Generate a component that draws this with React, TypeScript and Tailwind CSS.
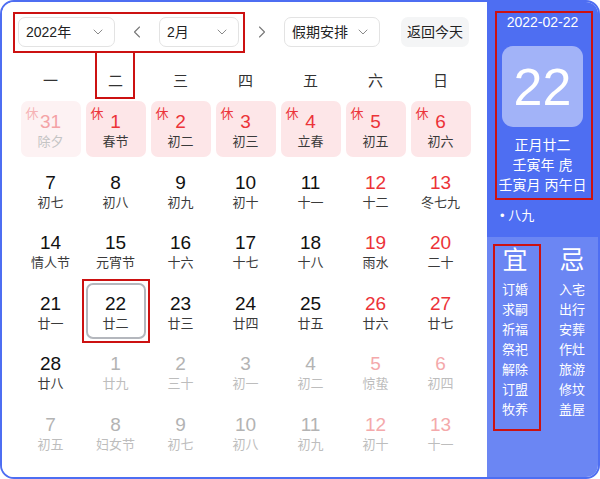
import React from "react";
import { ChevronDown, ChevronLeft, ChevronRight } from "lucide-react";

type Kind = "n" | "w" | "ph" | "h" | "x" | "xw";
type Day = { d: number; l: string; k: Kind; sel?: boolean };

const rows: Day[][] = [
  [
    { d: 31, l: "除夕", k: "ph" },
    { d: 1, l: "春节", k: "h" },
    { d: 2, l: "初二", k: "h" },
    { d: 3, l: "初三", k: "h" },
    { d: 4, l: "立春", k: "h" },
    { d: 5, l: "初五", k: "h" },
    { d: 6, l: "初六", k: "h" },
  ],
  [
    { d: 7, l: "初七", k: "n" },
    { d: 8, l: "初八", k: "n" },
    { d: 9, l: "初九", k: "n" },
    { d: 10, l: "初十", k: "n" },
    { d: 11, l: "十一", k: "n" },
    { d: 12, l: "十二", k: "w" },
    { d: 13, l: "冬七九", k: "w" },
  ],
  [
    { d: 14, l: "情人节", k: "n" },
    { d: 15, l: "元宵节", k: "n" },
    { d: 16, l: "十六", k: "n" },
    { d: 17, l: "十七", k: "n" },
    { d: 18, l: "十八", k: "n" },
    { d: 19, l: "雨水", k: "w" },
    { d: 20, l: "二十", k: "w" },
  ],
  [
    { d: 21, l: "廿一", k: "n" },
    { d: 22, l: "廿二", k: "n", sel: true },
    { d: 23, l: "廿三", k: "n" },
    { d: 24, l: "廿四", k: "n" },
    { d: 25, l: "廿五", k: "n" },
    { d: 26, l: "廿六", k: "w" },
    { d: 27, l: "廿七", k: "w" },
  ],
  [
    { d: 28, l: "廿八", k: "n" },
    { d: 1, l: "廿九", k: "x" },
    { d: 2, l: "三十", k: "x" },
    { d: 3, l: "初一", k: "x" },
    { d: 4, l: "初二", k: "x" },
    { d: 5, l: "惊蛰", k: "xw" },
    { d: 6, l: "初四", k: "xw" },
  ],
  [
    { d: 7, l: "初五", k: "x" },
    { d: 8, l: "妇女节", k: "x" },
    { d: 9, l: "初七", k: "x" },
    { d: 10, l: "初八", k: "x" },
    { d: 11, l: "初九", k: "x" },
    { d: 12, l: "初十", k: "xw" },
    { d: 13, l: "十一", k: "xw" },
  ],
];

const weekdays = ["一", "二", "三", "四", "五", "六", "日"];
const yi = ["订婚", "求嗣", "祈福", "祭祀", "解除", "订盟", "牧养"];
const ji = ["入宅", "出行", "安葬", "作灶", "旅游", "修坟", "盖屋"];

function Cell({ day }: { day: Day }) {
  const { k } = day;
  const bg =
    k === "h" ? "bg-[#fde6e8]" : k === "ph" ? "bg-[#fdf2f3]" : "bg-transparent";
  const numColor =
    k === "n"
      ? "text-[#111111]"
      : k === "w" || k === "h"
      ? "text-[#ec3338]"
      : k === "ph"
      ? "text-[#f4a3a6]"
      : k === "x"
      ? "text-[#b3b3b3]"
      : "text-[#f4a9ab]";
  const lunarColor =
    k === "n" || k === "w" || k === "h"
      ? "text-[#3a3a3a]"
      : k === "ph"
      ? "text-[#c4c4c4]"
      : "text-[#bdbdbd]";
  const border = day.sel
    ? "border-2 border-[#b4b7bd]"
    : "border-2 border-transparent";
  return (
    <div className="flex justify-center">
      <div
        className={`relative w-[60px] h-[56px] rounded-[7px] ${bg} ${border} flex flex-col items-center pt-[9px]`}
      >
        {(k === "h" || k === "ph") && (
          <span
            className={`absolute left-[3px] top-[3px] text-[13px] leading-[16px] ${
              k === "h" ? "text-[#ec3338]" : "text-[#f6b3b5]"
            }`}
          >
            休
          </span>
        )}
        <span className={`text-[19px] leading-[20px] ${numColor}`}>{day.d}</span>
        <span className={`text-[13px] leading-[20px] ${lunarColor}`}>{day.l}</span>
      </div>
    </div>
  );
}

function Select({ label, w }: { label: string; w: string }) {
  return (
    <div
      className={`${w} h-[30px] border border-[#e3e3e3] rounded-[7px] bg-white flex items-center justify-between pl-[7px] pr-[8px]`}
    >
      <span className="text-[14px] text-[#222] leading-none">{label}</span>
      <ChevronDown size={16} strokeWidth={1.3} className="text-[#777]" />
    </div>
  );
}

export default function App() {
  return (
    <div
      className="relative w-[600px] h-[479px] bg-white"
      style={{ fontFamily: '"Liberation Sans", "Noto Sans CJK SC", sans-serif' }}
    >
      <div className="w-full h-full border-2 border-[#4e6ef2] rounded-[14px] overflow-hidden flex">
        {/* Left calendar */}
        <div className="w-[485px] bg-white pl-4 pt-[15px]">
          <div className="flex items-center h-[30px]">
            <Select label="2022年" w="w-[97px]" />
            <div className="w-[44px] flex justify-center">
              <ChevronLeft size={20} strokeWidth={1.3} className="text-[#777]" />
            </div>
            <Select label="2月" w="w-[80px]" />
            <div className="w-[45px] flex justify-center">
              <ChevronRight size={20} strokeWidth={1.3} className="text-[#777]" />
            </div>
            <Select label="假期安排" w="w-[96px]" />
            <div className="ml-[21px] w-[68px] h-[30px] rounded-[7px] bg-[#f4f5f6] flex items-center justify-center text-[14px] text-[#222]">
              返回今天
            </div>
          </div>
          <div className="mt-[5px] w-[455px] h-[46px] grid grid-cols-7 items-center pt-[12px]">
            {weekdays.map((w) => (
              <div key={w} className="text-center text-[15px] text-[#333]">
                {w}
              </div>
            ))}
          </div>
          <div className="mt-[3px] w-[455px] grid grid-cols-7 gap-y-[4.6px]">
            {rows.flat().map((d, i) => (
              <Cell key={i} day={d} />
            ))}
          </div>
        </div>
        {/* Right panel */}
        <div className="flex-1 flex flex-col">
          <div className="h-[235px] bg-[#4e6ef2] flex flex-col items-center text-white">
            <div className="pt-[10px] text-[14px] leading-[20px]">2022-02-22</div>
            <div className="mt-[14px] w-[81px] h-[81px] rounded-[11px] bg-[#a2b3f8] flex items-center justify-center text-[52px] leading-none">
              22
            </div>
            <div className="mt-[8px] text-[14px] leading-[20px] text-center">
              <div>正月廿二</div>
              <div>壬寅年 虎</div>
              <div>壬寅月 丙午日</div>
            </div>
            <div className="self-start mt-[11px] pl-[13px] text-[13px] leading-[20px]">
              • 八九
            </div>
          </div>
          <div className="flex-1 bg-[#6b86f3] flex pl-[4px] pt-[9px] text-white">
            <div className="w-[48px] flex flex-col items-center">
              <div className="text-[25px] leading-[28px]">宜</div>
              <div className="mt-[6px] flex flex-col items-center">
                {yi.map((t) => (
                  <div key={t} className="text-[13px] leading-[20px]">
                    {t}
                  </div>
                ))}
              </div>
            </div>
            <div className="ml-[9px] w-[48px] flex flex-col items-center">
              <div className="text-[25px] leading-[28px]">忌</div>
              <div className="mt-[6px] flex flex-col items-center">
                {ji.map((t) => (
                  <div key={t} className="text-[13px] leading-[20px]">
                    {t}
                  </div>
                ))}
              </div>
            </div>
          </div>
        </div>
      </div>

      {/* Red annotation boxes */}
      <div className="absolute left-[13px] top-[12px] w-[232px] h-[41px] border-2 border-[#cc1111] pointer-events-none" />
      <div className="absolute left-[95px] top-[51px] w-[40px] h-[48px] border-2 border-[#cc1111] border-t-0 pointer-events-none" />
      <div className="absolute left-[82px] top-[279px] w-[68px] h-[64px] border-2 border-[#cc1111] pointer-events-none" />
      <div className="absolute left-[495px] top-[11px] w-[98px] h-[189px] border-2 border-[#cc1111] pointer-events-none" />
      <div className="absolute left-[493px] top-[244px] w-[48px] h-[187px] border-2 border-[#cc1111] pointer-events-none" />
    </div>
  );
}
